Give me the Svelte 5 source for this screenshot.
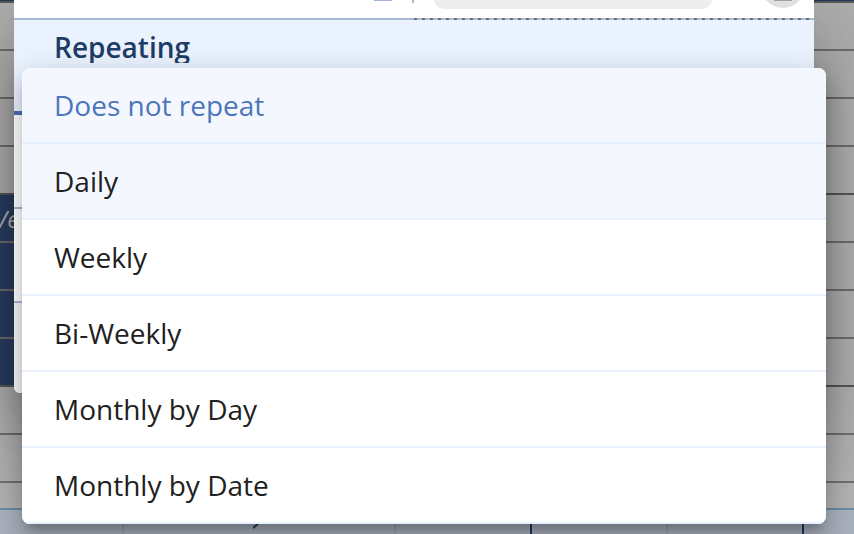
<script>
  const options = [
    'Does not repeat',
    'Daily',
    'Weekly',
    'Bi-Weekly',
    'Monthly by Day',
    'Monthly by Date'
  ];

  // rows of the day view behind the dialog
  const rows = [
    { kind: 'top' },
    { kind: 'open' },
    { kind: 'open' },
    { kind: 'open' },
    { kind: 'open dark' },
    { kind: 'booked', title: 'Ve' },
    { kind: 'booked' },
    { kind: 'booked' },
    { kind: 'booked dark' },
    { kind: 'open' },
    { kind: 'open' },
    { kind: 'last' }
  ];

  let selected = $state('Does not repeat');
  let highlighted = $state('Daily');
</script>

<div class="page">
  <div class="calendar" aria-hidden="true">
    {#each rows as row}
      <div class="row {row.kind}">
        {#if row.kind.startsWith('booked')}
          <div class="event">{row.title ?? ''}</div>
        {/if}
      </div>
    {/each}
    <div class="week">
      <div class="cell"></div>
      <div class="cell">
        <svg class="curve" width="12" height="24" viewBox="0 0 12 24">
          <path d="M10 0C10 8 7 13 0 18" fill="none" stroke="#1f3a5f" stroke-width="2" />
        </svg>
      </div>
      <div class="cell"><span class="marker"></span></div>
      <div class="cell"><span class="marker"></span></div>
    </div>
  </div>

  <div class="dialog" role="dialog" aria-label="Event">
    <div class="toolbar">
      <span class="underline"></span>
      <span class="divider"></span>
      <span class="field"></span>
      <button class="round" aria-label="Remove"><span></span></button>
    </div>
    <section class="repeating">
      <h2 id="repeating">Repeating</h2>
    </section>
    <div class="panel"></div>
    <div class="panel"></div>
    <div class="footer"></div>
  </div>

  <div class="menu" role="listbox" aria-labelledby="repeating">
    {#each options as option}
      <button
        class="option"
        class:selected={option === selected}
        class:highlighted={option === highlighted}
        role="option"
        aria-selected={option === selected}
        onclick={() => (selected = option)}
        onmouseenter={() => (highlighted = option)}
      >
        {option}
      </button>
    {/each}
  </div>
</div>

<style>
  :global(body) {
    background: #b0b0b0;
  }

  .page {
    position: relative;
    min-height: 100vh;
    overflow: hidden;
    font-family: 'Open Sans', 'Noto Sans', sans-serif;
    font-size: 28px;
  }

  .calendar {
    position: absolute;
    inset: 0;
    display: flex;
    flex-direction: column;
    overflow: hidden;
  }

  .row {
    box-sizing: border-box;
    flex: none;
    height: 48px;
    border-bottom: 2px solid #736d6d;
  }

  .row.top {
    height: 3px;
    background: #24385a;
    border-color: #5b5b5b;
  }

  .row.dark {
    border-color: #585656;
  }

  .row.last {
    height: 27px;
    border-color: #6c8aa3;
  }

  .event {
    width: 60px;
    height: 46px;
    margin-left: -6px;
    background: #2a3f63;
    color: #b4b4b4;
    font-size: 24px;
    font-style: italic;
    line-height: 48px;
  }

  .week {
    flex: 1;
    display: grid;
    grid-template-columns: 124px repeat(3, 272px);
    background: #a8afbc;
  }

  .cell {
    display: flex;
    justify-content: center;
    border-right: 2px solid #9aa3b0;
  }

  .marker {
    width: 2px;
    background: #1f3a5f;
  }

  .dialog {
    position: relative;
    margin: 0 40px 0 14px;
    border-radius: 0 0 6px 6px;
    background: #fff;
    box-shadow:
      0 22px 30px -14px rgba(0, 0, 0, 0.2),
      0 48px 76px 6px rgba(0, 0, 0, 0.14),
      0 18px 92px 16px rgba(0, 0, 0, 0.12);
  }

  .toolbar {
    position: relative;
    display: flex;
    align-items: flex-end;
    justify-content: flex-end;
    height: 18px;
    padding-right: 9px;
    overflow: hidden;
    border-bottom: 2px solid #a9b8d3;
  }

  .toolbar::after {
    content: '';
    position: absolute;
    right: 0;
    bottom: 0;
    left: 50%;
    height: 2px;
  }

  .underline {
    width: 18px;
    height: 4px;
    margin: 0 20px 17px 0;
    background: #a3b6da;
  }

  .divider {
    width: 2px;
    height: 20px;
    margin: 0 20px 15px 0;
    background: #a9b8d3;
  }

  .field {
    width: 278px;
    height: 40px;
    margin: 0 49px 9px 0;
    border-radius: 10px;
    background: #ededed;
  }

  .round {
    display: flex;
    justify-content: center;
    align-items: center;
    flex: none;
    width: 44px;
    height: 44px;
    margin: 0 0 10px;
    padding: 0;
    border: 0;
    border-radius: 50%;
    background: #e0e0e0;
  }

  .round span {
    width: 18px;
    height: 2px;
    margin-top: 28px;
    background: #a0a0a0;
  }

  .repeating {
    box-sizing: border-box;
    height: 95px;
    padding: 11px 40px;
    border-bottom: 4px solid #4c70b4;
    background: #eaf2fe;
  }

  .repeating::before {
    content: '';
    position: absolute;
    top: 18px;
    right: 0;
    left: 50%;
    height: 2px;
    background: repeating-linear-gradient(90deg, #666c78 0 3px, transparent 3px 8px);
  }

  h2 {
    margin: 0;
    overflow: hidden;
    color: #1e3c66;
    font-size: 28px;
    font-weight: 600;
    line-height: 32px;
  }

  .panel {
    height: 92px;
    border-bottom: 2px solid #a9b8d3;
  }

  .footer {
    height: 90px;
    border-radius: 0 0 6px 6px;
    background: #f5f5f5;
  }

  .menu {
    position: absolute;
    top: 68px;
    right: 28px;
    left: 22px;
    display: flex;
    flex-direction: column;
    overflow: hidden;
    border-radius: 8px;
    background: #fff;
    box-shadow:
      0 10px 10px -6px rgba(0, 0, 0, 0.2),
      0 16px 20px 2px rgba(0, 0, 0, 0.14),
      0 6px 28px 4px rgba(0, 0, 0, 0.12);
  }

  .option {
    box-sizing: border-box;
    height: 76px;
    padding: 0 32px;
    border: 0;
    border-bottom: 2px solid #e7f1fe;
    background: #fff;
    color: #212121;
    font: inherit;
    text-align: left;
    cursor: pointer;
  }

  .option.selected,
  .option.highlighted {
    background: #f4f7fe;
  }

  .option.selected {
    color: #4c76b9;
  }
</style>
